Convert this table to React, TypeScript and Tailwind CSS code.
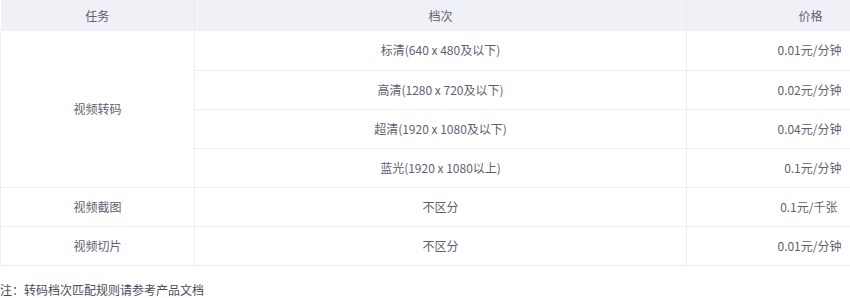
import React from "react";

const font = { fontFamily: '"Microsoft YaHei", "Noto Sans CJK SC", "Noto Sans", sans-serif' };

export default function App() {
  const td = "h-[39px] border-b border-[#eceef7] text-[12px] text-[#5f5f6f] p-0";
  return (
    <div className="w-[850px] h-[298px] bg-white" style={font}>
      <table className="w-[849px] border-collapse table-fixed">
        <colgroup>
          <col className="w-[194px]" />
          <col className="w-[492px]" />
          <col className="w-[163px]" />
        </colgroup>
        <thead>
          <tr className="bg-[#f0f1f7]">
            <th className="h-[31px] p-0 text-[12px] font-normal text-[#5f5f6f] text-center border-r border-[#e8eaf4]">任务</th>
            <th className="h-[31px] p-0 text-[12px] font-normal text-[#5f5f6f] text-center border-r border-[#e8eaf4]">档次</th>
            <th className="h-[31px] p-0 pr-[27px] text-[12px] font-normal text-[#5f5f6f] text-right">价格</th>
          </tr>
        </thead>
        <tbody>
          <tr>
            <td rowSpan={4} className={`${td} text-center border-l border-r`}>视频转码</td>
            <td className={`${td} h-[38px] text-center border-r`}>标清(640 x 480及以下)</td>
            <td className={`${td} h-[38px] text-right pr-[8px]`}>0.01元/分钟</td>
          </tr>
          <tr>
            <td className={`${td} text-center border-r`}>高清(1280 x 720及以下)</td>
            <td className={`${td} text-right pr-[8px]`}>0.02元/分钟</td>
          </tr>
          <tr>
            <td className={`${td} text-center border-r`}>超清(1920 x 1080及以下)</td>
            <td className={`${td} text-right pr-[8px]`}>0.04元/分钟</td>
          </tr>
          <tr>
            <td className={`${td} text-center border-r`}>蓝光(1920 x 1080以上)</td>
            <td className={`${td} text-right pr-[8px]`}>0.1元/分钟</td>
          </tr>
          <tr>
            <td className={`${td} text-center border-l border-r`}>视频截图</td>
            <td className={`${td} text-center border-r`}>不区分</td>
            <td className={`${td} text-right pr-[12px]`}>0.1元/千张</td>
          </tr>
          <tr>
            <td className={`${td} text-center border-l border-r`}>视频切片</td>
            <td className={`${td} text-center border-r`}>不区分</td>
            <td className={`${td} text-right pr-[8px]`}>0.01元/分钟</td>
          </tr>
        </tbody>
      </table>
      <div className="mt-[16px] text-[12px] leading-[16px] text-[#4b4b5a]">注：转码档次匹配规则请参考产品文档</div>
    </div>
  );
}
